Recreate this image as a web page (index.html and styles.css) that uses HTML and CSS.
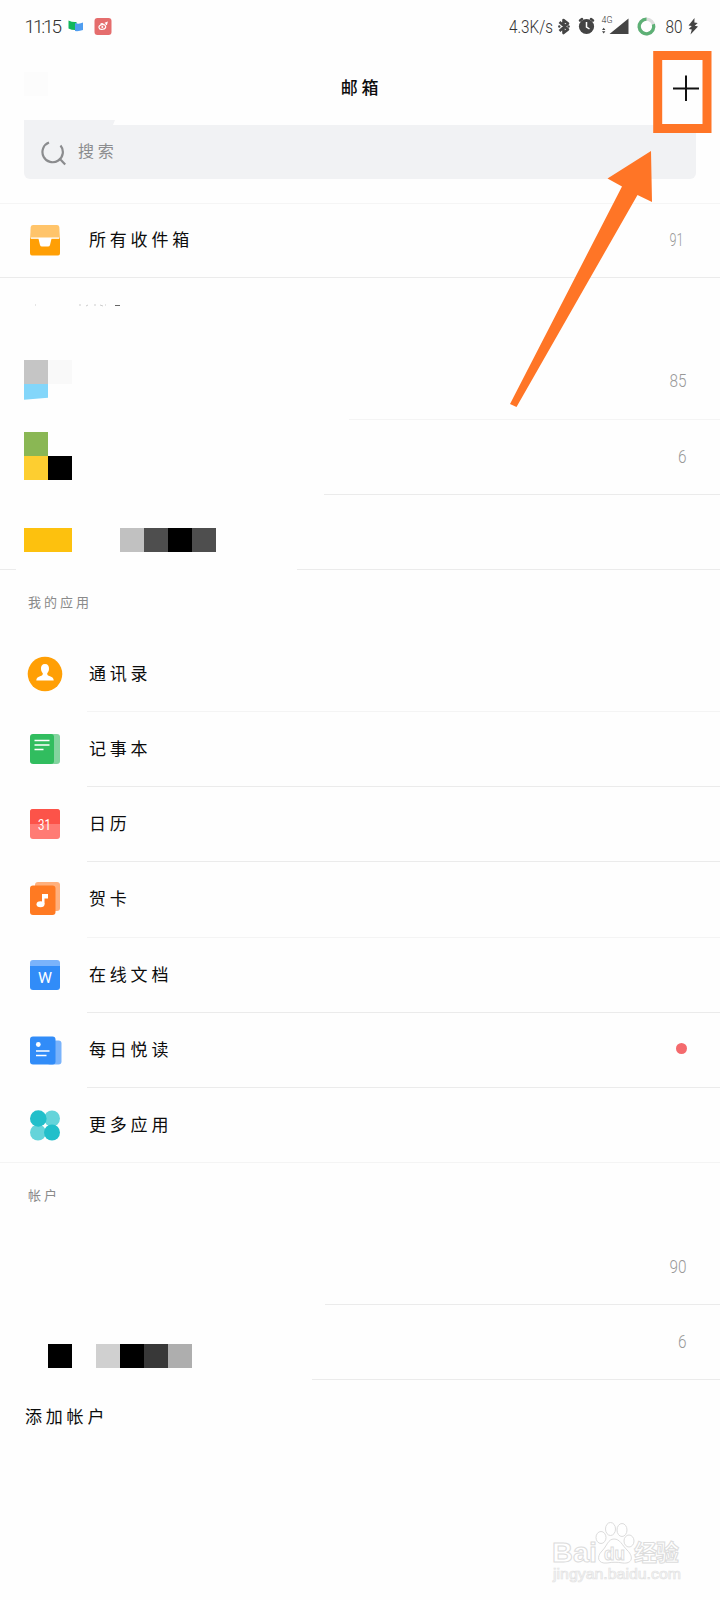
FILE: index.html
```html
<!DOCTYPE html>
<html lang="zh-CN">
	<head>
		<meta charset="UTF-8">
		<title>邮箱</title>
		<link rel="stylesheet" href="styles.css">
	</head>
	<body>
		<div class="page">
			<div class="status">
				<svg class="st-left" width="100" height="24" viewBox="20 14 100 24">
					<text class="led" x="24.500" y="32.500" font-size="19" textLength="37.500" lengthAdjust="spacing">11:15</text>
					<path fill="#12b75d" d="M68.500 20.500q4 2 8 1.500v8q-4 .5-8-1.500z"/>
					<path fill="#4f9df0" d="M75 23q4 1.500 8-.5v7.500q-4 1.500-8 1z"/>
					<rect x="94.500" y="18" width="17" height="17" rx="3" fill="#e56d6d"/>
					<g fill="none" stroke="#fff" stroke-width="1.200">
						<ellipse cx="102.300" cy="27" rx="3.400" ry="2.300" transform="rotate(-12 102.300 27)"/>
						<path d="M100.500 24.500q1.500-1.500 3 0M104.800 23.300l2.200-.8-.7 2.500"/>
					</g>
					<circle cx="102.300" cy="27" r="1" fill="#fff"/>
				</svg>
				<svg class="st-right" width="200" height="24" viewBox="505 14 200 24">
					<text class="led" x="509" y="32.500" font-size="19" textLength="44" lengthAdjust="spacingAndGlyphs">4.3K/s</text>
					<path fill="none" stroke="#444" stroke-width="2.600" stroke-linejoin="round" d="M559.500 22l8.500 7.500-4.500 3.500V20l4.500 3.500-8.500 7.500"/>
					<circle cx="559.300" cy="26.500" r="1.200" fill="#444"/><circle cx="568.600" cy="26.500" r="1.200" fill="#444"/>
					<circle cx="586.500" cy="26.500" r="7.600" fill="#444"/>
					<path fill="none" stroke="#444" stroke-width="2.500" stroke-linecap="round" d="M580 20.500l2-1.500M593 20.500l-2-1.500"/>
					<path fill="none" stroke="#fff" stroke-width="1.500" d="M586.500 22v5l3 2"/>
					<text class="led" x="601.500" y="23" font-size="8.500" textLength="11" lengthAdjust="spacingAndGlyphs">4G</text>
					<path fill="#444" d="M628.500 18.500V34h-19zM602 30l1.700-2.300 1.700 2.300zM602 31.300h3.400l-1.700 2.200z"/>
					<circle cx="646.500" cy="26.500" r="7.300" fill="none" stroke="#ddd" stroke-width="3.300"/>
					<path fill="none" stroke="#5db075" stroke-width="3.300" d="M646.500 19.200a7.300 7.300 0 1 0 6.900 5"/>
					<text class="led" x="665.500" y="32.500" font-size="18" textLength="17" lengthAdjust="spacingAndGlyphs">80</text>
					<path fill="#444" d="M694.500 18l-6 7.500 3.300.5-3 3 3 .5-1.300 5 7.500-8-3.300-.7 3-2.800-3.300-.5z"/>
				</svg>
			</div>
			<div class="nav">
				<span class="nav-left"></span>
				<h4>邮箱</h4>
				<svg class="plus" width="26" height="26" viewBox="0 0 26 26"><path d="M0 13.500h26M13 .5v25.500" stroke="#111" stroke-width="2"/></svg>
			</div>
			<div class="search">
				<svg width="26" height="26" viewBox="0 0 26 26" fill="none" stroke="#8b8c8e" stroke-width="2.200">
					<path d="M8 2.500A10.200 10.200 0 1 0 19.500 5.500M18.500 18.500l5.700 6"/>
				</svg>
				<span>搜索</span>
			</div>

			<div class="row inbox">
				<svg class="icon" width="36" height="36" viewBox="0 0 36 36">
					<path fill="#ffc46a" d="M6 3h24q2 0 2.300 2L33 17H3L3.700 5Q4 3 6 3z"/>
					<path fill="#ff9f05" d="M3 16.500h30V31q0 2.500-2.500 2.500h-25Q3 33.500 3 31z"/>
					<path fill="#fff" d="M4 15.500h28v1.200h-7.500L23 23q-.4 1.500-2 1.500h-6q-1.600 0-2-1.500l-1.500-6.300H4z"/>
				</svg>
				<span class="name">所有收件箱</span>
				<svg class="num" width="26" height="26"><text x="8.500" y="19" textLength="14" lengthAdjust="spacingAndGlyphs">91</text></svg>
			</div>
			<div class="line full"></div>

			<div class="group marks">
				<svg width="100" height="8" viewBox="0 0 100 8" stroke="#ccc" fill="none"><path d="M9 2h1M53 2h2M60 3l2-1M68 2h2M74 2l3 1M79 2h1"/><path stroke="#666" d="M89 2.500h5"/></svg>
			</div>
			<div class="row mail">
				<div class="mosaic m1"><i class="c-gray"></i><i class="c-pale"></i><i class="c-sky"></i></div>
				<svg class="num" width="26" height="26"><text x="8.500" y="19" textLength="17" lengthAdjust="spacingAndGlyphs">85</text></svg>
			</div>
			<div class="line l1"></div>
			<div class="row mail">
				<div class="mosaic m2"><i class="c-green"></i><i></i><i class="c-yellow"></i><i class="c-black"></i></div>
				<svg class="num" width="26" height="26"><text x="17" y="19" textLength="8.500" lengthAdjust="spacingAndGlyphs">6</text></svg>
			</div>
			<div class="line l2"></div>
			<div class="row mail">
				<div class="mosaic m3"><i class="c-amber"></i><i class="c-amber"></i><i></i><i></i><i class="c-silver"></i><i class="c-dark"></i><i class="c-black"></i><i class="c-dark"></i></div>
			</div>
			<div class="line l3"></div>

			<div class="group apps-title">我的应用</div>
			<div class="row">
				<svg class="icon" width="36" height="36" viewBox="0 0 36 36">
					<circle cx="18" cy="18" r="17.300" fill="#ff9f05"/>
					<path fill="#fff" d="M18 8c3 0 4.200 2 4 5-.1 2-1 3.400-1.800 4.200 0 1.800.6 2.300 2.800 3 2.400.8 3.700 1.700 3.700 4.300H9.300c0-2.600 1.300-3.500 3.700-4.300 2.200-.7 2.800-1.200 2.800-3C15 16.400 14.100 15 14 13c-.2-3 1-5 4-5z"/>
				</svg>
				<span class="name">通讯录</span>
			</div>
			<div class="line pale"></div>
			<div class="row">
				<svg class="icon" width="36" height="36" viewBox="0 0 36 36">
					<rect x="12" y="3" width="21" height="30" rx="3" fill="#83d49f"/>
					<rect x="3" y="3" width="24" height="30" rx="3" fill="#31bd5f"/>
					<path d="M7.500 9.500h15M7.500 14h15M7.500 18.500h9" stroke="#fff" stroke-width="1.600"/>
				</svg>
				<span class="name">记事本</span>
			</div>
			<div class="line"></div>
			<div class="row">
				<svg class="icon" width="36" height="36" viewBox="0 0 36 36">
					<rect x="3" y="3" width="30" height="30" rx="3" fill="#ff7b74"/>
					<path fill="#fc5349" d="M6 3h24q3 0 3 3v12H3V6q0-3 3-3z"/>
					<text class="cal" x="11" y="23.500" textLength="13" lengthAdjust="spacingAndGlyphs">31</text>
				</svg>
				<span class="name">日历</span>
			</div>
			<div class="line"></div>
			<div class="row">
				<svg class="icon" width="36" height="36" viewBox="0 0 36 36">
					<rect x="8" y="1" width="25" height="29" rx="3" fill="#ffb07d"/>
					<rect x="3" y="4.500" width="25.500" height="29.500" rx="3" fill="#ff7a22"/>
					<ellipse cx="13.500" cy="23.300" rx="4" ry="3" fill="#fff"/>
					<path fill="#fff" d="M15 13h6v4.500h-3.500v5.500H15z"/>
				</svg>
				<span class="name">贺卡</span>
			</div>
			<div class="line pale"></div>
			<div class="row">
				<svg class="icon" width="36" height="36" viewBox="0 0 36 36">
					<rect x="3" y="3" width="30" height="20" rx="3" fill="#7ab3fb"/>
					<path fill="#318cf8" d="M3 9h30v21q0 3-3 3H6q-3 0-3-3z"/>
					<text class="doc" x="11" y="26" textLength="14" lengthAdjust="spacingAndGlyphs">W</text>
				</svg>
				<span class="name">在线文档</span>
			</div>
			<div class="line"></div>
			<div class="row">
				<svg class="icon" width="36" height="36" viewBox="0 0 36 36">
					<rect x="20" y="8.500" width="14.500" height="24" rx="3" fill="#7ab3fb"/>
					<rect x="3" y="4.500" width="25.500" height="28" rx="3" fill="#318cf8"/>
					<circle cx="11.300" cy="12.500" r="2.400" fill="#fff"/>
					<path d="M9 19h13.500M9 23.500h10.500" stroke="#fff" stroke-width="1.500"/>
				</svg>
				<span class="name">每日悦读</span>
				<b class="dot"></b>
			</div>
			<div class="line"></div>
			<div class="row">
				<svg class="icon" width="36" height="36" viewBox="0 0 36 36">
					<circle cx="25" cy="11.500" r="8" fill="#65d4da"/>
					<circle cx="11" cy="25.500" r="8" fill="#65d4da"/>
					<circle cx="11.300" cy="11.500" r="8.300" fill="#22bfca"/>
					<circle cx="25" cy="25.500" r="8" fill="#22bfca"/>
				</svg>
				<span class="name">更多应用</span>
			</div>
			<div class="line full pale"></div>

			<div class="group account-title">帐户</div>
			<div class="row mail">
				<svg class="num" width="26" height="26"><text x="8.500" y="19" textLength="17" lengthAdjust="spacingAndGlyphs">90</text></svg>
			</div>
			<div class="line l4"></div>
			<div class="row mail">
				<div class="mosaic m5"><i class="c-black"></i><i></i><i class="c-light"></i><i class="c-black"></i><i class="c-deep"></i><i class="c-mid"></i></div>
				<svg class="num" width="26" height="26"><text x="17" y="19" textLength="8.500" lengthAdjust="spacingAndGlyphs">6</text></svg>
			</div>
			<div class="line l5"></div>
			<div class="add">添加帐户</div>

			<div class="mark">
				<svg width="136" height="70" viewBox="550 1518 136 70">
					<g class="outline">
						<text x="552" y="1562" font-size="28" font-weight="700" textLength="45" lengthAdjust="spacingAndGlyphs">Bai</text>
						<ellipse cx="601" cy="1537.500" rx="5" ry="6"/>
						<ellipse cx="610.500" cy="1529" rx="5" ry="6.500"/>
						<ellipse cx="622" cy="1530" rx="5" ry="6.500"/>
						<ellipse cx="629" cy="1541" rx="5" ry="6"/>
						<path d="M614 1539c6 0 8 6 13 11 8 8 4 14-4 13-6-1-10-1-16 0-9 1-11-6-5-12 5-5 6-12 12-12z"/>
						<text x="604" y="1560" font-size="19" font-weight="700" textLength="21" lengthAdjust="spacingAndGlyphs">du</text>
						<text class="cjk" x="634" y="1561" font-size="23" font-weight="700" textLength="45">经验</text>
					</g>
					<text class="site" x="553" y="1579" font-size="15" textLength="128" lengthAdjust="spacingAndGlyphs">jingyan.baidu.com</text>
				</svg>
			</div>

			<!-- 标注框和箭头 -->
			<svg class="guide" width="220" height="370" viewBox="500 45 220 370">
				<rect x="657.700" y="55.500" width="49.300" height="73" fill="none" stroke="#ff7526" stroke-width="9"/>
				<path fill="#ff7526" d="M651 151L652 202 637.500 195 516.500 407 510 404 622 186.500 607.500 178.500z"/>
			</svg>
		</div>
	</body>
</html>
```
FILE: styles.css
```css
*{
	margin: 0;
	padding: 0;
	box-sizing: border-box;
}
body{
	background: #fefefe;
	font-family: "Noto Sans CJK SC", sans-serif;
	color: #0c0c0c;
}
.page{
	position: relative;
	width: 720px;
	height: 1600px;
	overflow: hidden;
}
svg{
	display: block;
	flex: none;
}
.status{
	display: flex;
	justify-content: space-between;
	height: 50px;
	padding: 14px 15px 0 20px;
}
.led{
	font-family: Roboto, sans-serif;
	font-weight: 300;
	fill: #333;
}
.nav{
	display: flex;
	justify-content: space-between;
	height: 70px;
	padding: 22px 21px 0 24px;
}
.nav-left{
	width: 24px;
	height: 24px;
	background: #fcfcfc;
}
h4{
	padding-left: 2px;
	font-size: 17px;
	line-height: 29px;
	font-weight: 500;
	letter-spacing: 3.8px;
}
.plus{
	margin-top: 3px;
}
.search{
	display: flex;
	align-items: center;
	width: 672px;
	height: 59px;
	margin-left: 24px;
	padding: 6px 0 0 17px;
	background: #f1f2f4;
	border-radius: 0 0 6px 6px;
	clip-path: polygon(0 0, 91px 0, 89px 5px, 100% 5px, 100% 100%, 0 100%);
	color: #8b8c8e;
	font-size: 16px;
	letter-spacing: 3.8px;
}
.search span{
	margin: -6px 0 0 11px;
}
.row{
	display: flex;
	align-items: center;
	height: 74.25px;
	padding: 0 33px 0 27px;
}
.inbox{
	height: 74px;
	margin-top: 24px;
	padding-bottom: 2px;
	border-top: 1px solid #f5f5f5;
}
.icon{
	margin-right: 26px;
}
.name{
	margin-top: -3px;
	font-size: 17px;
	letter-spacing: 3.8px;
}
.inbox .name{
	margin-top: -2px;
}
.num{
	margin-left: auto;
}
.num text{
	font-family: Roboto, sans-serif;
	font-size: 18px;
	font-weight: 300;
	fill: #999;
}
.cal{
	font-family: Roboto, sans-serif;
	font-size: 15px;
	font-weight: 400;
	fill: #fff;
}
.doc{
	font-family: Roboto, sans-serif;
	font-size: 15px;
	fill: #fff;
}
.dot{
	width: 11px;
	height: 11px;
	margin: -2px 0 0 auto;
	border-radius: 50%;
	background: #f46a6d;
}
.line{
	height: 1px;
	margin-left: 87px;
	background: #ebebeb;
}
.full{
	margin-left: 0;
}
.pale{
	background: #f4f4f4;
}
.l1{
	margin-left: 349px;
	background: #f4f4f4;
}
.l2{
	margin-left: 324px;
}
.l3{
	margin-left: 0;
	background: linear-gradient(90deg, #ebebeb 16px, transparent 16px, transparent 297px, #ebebeb 297px);
}
.l4{
	margin-left: 325px;
}
.l5{
	margin-left: 312px;
}
.group{
	height: 66.4px;
	padding-left: 28px;
	color: #8a8a8a;
	font-size: 13px;
	letter-spacing: 3px;
}
.marks{
	padding: 25px 0 0 26px;
}
.apps-title{
	line-height: 64px;
}
.account-title{
	line-height: 64px;
}
.mail{
	align-items: flex-start;
	padding-left: 24px;
}
.mail .num{
	margin-top: 24px;
}
.mosaic{
	display: grid;
	grid-template-columns: 24px 24px;
	grid-auto-rows: 24px;
}
.m1{
	margin-top: 15.4px;
}
.m1 .c-sky{
	clip-path: polygon(0 0, 100% 0, 100% 14px, 0 16px);
}
.m2{
	margin-top: 12px;
}
.m3{
	grid-template-columns: repeat(8, 24px);
	margin-top: 33px;
}
.m5{
	grid-template-columns: repeat(6, 24px);
	margin: 39px 0 0 24px;
}
.c-gray{ background: #c5c5c5; }
.c-pale{ background: #f9f9f9; }
.c-sky{ background: #83d6fa; }
.c-green{ background: #8ab754; }
.c-yellow{ background: #fdce30; }
.c-black{ background: #000; }
.c-amber{ background: #fdc10e; }
.c-silver{ background: #c1c1c1; }
.c-dark{ background: #4e4e4e; }
.c-light{ background: #d0d0d0; }
.c-deep{ background: #383838; }
.c-mid{ background: #aeaeae; }
.add{
	height: 74px;
	padding-left: 25px;
	font-size: 17px;
	line-height: 71px;
	letter-spacing: 3.8px;
}
.mark{
	display: flex;
	justify-content: flex-end;
	padding: 64px 34px 0 0;
}
.mark text{
	font-family: "Liberation Sans", sans-serif;
}
.mark .cjk{
	font-family: "Noto Sans CJK SC", sans-serif;
}
.outline{
	fill: #fff;
	stroke: #dcdcdc;
	stroke-width: 1;
}
.mark .site{
	fill: #fdfdfd;
	stroke: #e2e2e2;
	stroke-width: .7;
}
.guide{
	position: absolute;
	left: 500px;
	top: 45px;
}
```
